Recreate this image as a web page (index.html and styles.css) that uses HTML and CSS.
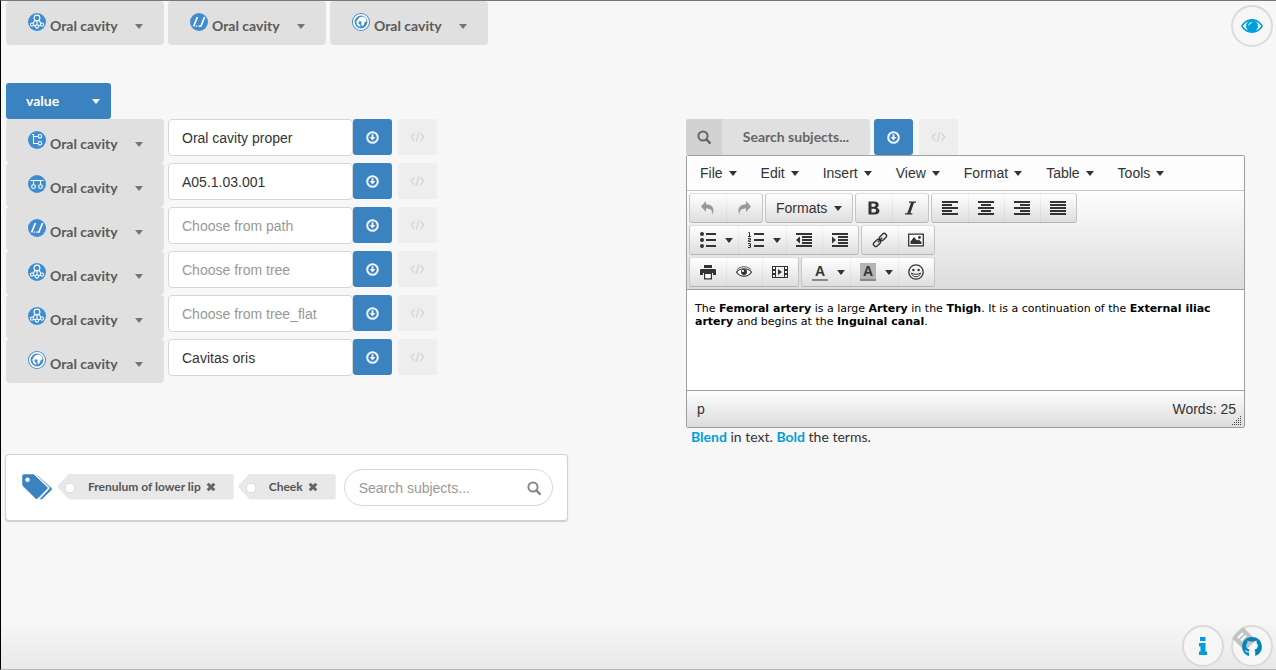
FILE: index.html
```
<!DOCTYPE html>
<html lang="en">
<head>
<meta charset="utf-8">
<title>Subject annotation</title>
<link rel="stylesheet" href="styles.css">
</head>
<body>
<svg class="defs" aria-hidden="true">
  <symbol id="tree" viewBox="0 0 18 18"><circle cx="9" cy="9" r="9" fill="#3f8dd0"/><g fill="none" stroke="#fff" stroke-width="1.1"><circle cx="9" cy="5" r="2.9"/><circle cx="4" cy="11.600" r="1.600"/><circle cx="9" cy="13.500" r="1.600"/><circle cx="14" cy="11.600" r="1.600"/><path d="M9 8v3.800M7.300 7.400l-2.300 2.800M10.700 7.400l2.300 2.800M5.600 12.200l1.900.8M12.400 12.200l-1.900.8"/></g></symbol>
  <symbol id="path" viewBox="0 0 18 18"><circle cx="9" cy="9" r="9" fill="#3f8dd0"/><g fill="none" stroke="#fff" stroke-width="1.6"><path d="M7.4 4L3.6 13.4M14.6 4l-3.8 9.4"/><path d="M5.800 13.200h1.400M8.300 13.200h3" stroke-width="1.3"/></g></symbol>
  <symbol id="globe" viewBox="0 0 18 18"><circle cx="9" cy="9" r="9" fill="#3f8dd0"/><circle cx="9" cy="9" r="7.200" fill="none" stroke="#fff" stroke-width="1.6"/><path d="M7 4.500l4-1 2.600 1.800 1.200 2.700-2 1-.8 2.600-1.800 2-1-3 .6-1.800-2-.6-1.500.8.5 2 1.800 1-.5 2-3-2-.8-3.500z" fill="#fff"/></symbol>
  <symbol id="side" viewBox="0 0 18 18"><circle cx="9" cy="9" r="9" fill="#3f8dd0"/><g fill="none" stroke="#fff" stroke-width="1.1"><path d="M4 3.500h1.500M5.500 3v9.500h4.500M5.500 5.500h4.500"/><circle cx="11.900" cy="5.300" r="1.800"/><circle cx="11.900" cy="12.300" r="1.800"/></g></symbol>
  <symbol id="fork" viewBox="0 0 18 18"><circle cx="9" cy="9" r="9" fill="#3f8dd0"/><g fill="none" stroke="#fff" stroke-width="1.1"><path d="M2.500 5.500h13M5.500 5.500v4.200M12.500 5.500v4.200"/><circle cx="5.500" cy="11.600" r="1.900"/><circle cx="12.500" cy="11.600" r="1.900"/></g></symbol>
  <symbol id="down" viewBox="0 0 14 14"><circle cx="7" cy="7" r="5.700" fill="none" stroke="currentColor" stroke-width="2.2"/><path d="M6 3.400h2v3h2.200L7 10.300 3.800 6.400H6z" fill="currentColor"/></symbol>
  <symbol id="code" viewBox="0 0 16 12"><path d="M4.8 2L1.2 6l3.6 4M11.2 2l3.6 4-3.6 4M9.2 1L6.8 11" fill="none" stroke="currentColor" stroke-width="1.3"/></symbol>
  <symbol id="search" viewBox="0 0 14 14"><circle cx="6" cy="6" r="4.6" fill="none" stroke="currentColor" stroke-width="2"/><path d="M9.4 9.4l3.4 3.4" stroke="currentColor" stroke-width="2.4" stroke-linecap="round"/></symbol>
  <symbol id="cross" viewBox="0 0 10 10"><path d="M1.7 1.7l6.6 6.6M8.3 1.7L1.7 8.3" stroke="currentColor" stroke-width="3"/></symbol>
</svg>

<header class="topbar">
  <button class="drop"><svg><use href="#tree"/></svg><span>Oral cavity</span><i class="caret"></i></button>
  <button class="drop"><svg><use href="#path"/></svg><span>Oral cavity</span><i class="caret"></i></button>
  <button class="drop"><svg><use href="#globe"/></svg><span>Oral cavity</span><i class="caret"></i></button>
</header>

<main class="columns">
  <section>
    <button class="value">value<i class="caret"></i></button>
    <div class="row"><button class="drop"><svg><use href="#side"/></svg><span>Oral cavity</span><i class="caret"></i></button><input class="field" aria-label="Name" value="Oral cavity proper"><button class="sq go" aria-label="Load"><svg><use href="#down"/></svg></button><button class="sq code" aria-label="Code" disabled><svg><use href="#code"/></svg></button></div>
    <div class="row"><button class="drop"><svg><use href="#fork"/></svg><span>Oral cavity</span><i class="caret"></i></button><input class="field" aria-label="Identifier" value="A05.1.03.001"><button class="sq go" aria-label="Load"><svg><use href="#down"/></svg></button><button class="sq code" aria-label="Code" disabled><svg><use href="#code"/></svg></button></div>
    <div class="row"><button class="drop"><svg><use href="#path"/></svg><span>Oral cavity</span><i class="caret"></i></button><input class="field" aria-label="Path" placeholder="Choose from path"><button class="sq go" aria-label="Load"><svg><use href="#down"/></svg></button><button class="sq code" aria-label="Code" disabled><svg><use href="#code"/></svg></button></div>
    <div class="row"><button class="drop"><svg><use href="#tree"/></svg><span>Oral cavity</span><i class="caret"></i></button><input class="field" aria-label="Tree" placeholder="Choose from tree"><button class="sq go" aria-label="Load"><svg><use href="#down"/></svg></button><button class="sq code" aria-label="Code" disabled><svg><use href="#code"/></svg></button></div>
    <div class="row"><button class="drop"><svg><use href="#tree"/></svg><span>Oral cavity</span><i class="caret"></i></button><input class="field" aria-label="Flat tree" placeholder="Choose from tree_flat"><button class="sq go" aria-label="Load"><svg><use href="#down"/></svg></button><button class="sq code" aria-label="Code" disabled><svg><use href="#code"/></svg></button></div>
    <div class="row"><button class="drop"><svg><use href="#globe"/></svg><span>Oral cavity</span><i class="caret"></i></button><input class="field" aria-label="Latin name" value="Cavitas oris"><button class="sq go" aria-label="Load"><svg><use href="#down"/></svg></button><button class="sq code" aria-label="Code" disabled><svg><use href="#code"/></svg></button></div>

    <div class="tags">
      <svg class="tagicon" viewBox="0 0 31 26"><path d="M10 1h3.5q1.5 0 2.600 1.100L29.500 14q1 1 0 2L20 25.200h-2.500" fill="#3b83c0"/><path fill-rule="evenodd" d="M0 2Q0 0 2 0h9q1.500 0 2.500 1L25.500 13q1 1 0 2L15.500 24.800q-1 1-2 0L1 12.500Q0 11.500 0 10zM5.500 3.800a2 2 0 1 0 0 4 2 2 0 0 0 0-4z" fill="#3b83c0" stroke="#fff" stroke-width=".5"/><path d="M12.500 0L26.500 13.300q.8.700 0 1.500L17 25" fill="none" stroke="#fff" stroke-width="1.300"/></svg>
      <span class="tag">Frenulum of lower lip<button class="x" aria-label="Remove Frenulum of lower lip"><svg><use href="#cross"/></svg></button></span>
      <span class="tag">Cheek<button class="x" aria-label="Remove Cheek"><svg><use href="#cross"/></svg></button></span>
      <label class="find"><input aria-label="Search subjects" placeholder="Search subjects..."><svg><use href="#search"/></svg></label>
    </div>
  </section>

  <section>
    <div class="subject">
      <button class="searchbtn"><span class="mag"><svg><use href="#search"/></svg></span><span class="searchtext">Search subjects...</span></button>
      <button class="sq go" aria-label="Load"><svg><use href="#down"/></svg></button>
      <button class="sq code" aria-label="Code" disabled><svg><use href="#code"/></svg></button>
    </div>
    <div class="editor">
      <nav class="menubar">
        <button>File<i class="caret"></i></button><button>Edit<i class="caret"></i></button><button>Insert<i class="caret"></i></button><button>View<i class="caret"></i></button><button>Format<i class="caret"></i></button><button>Table<i class="caret"></i></button><button>Tools<i class="caret"></i></button>
      </nav>
      <div class="tools">
        <div class="toolrow">
          <div class="group dim">
            <button aria-label="Undo"><svg viewBox="0 0 16 16"><path d="M6 1v3.300c5.500 0 9.500 4 6.500 10.700.3-4.500-2-6.500-6.500-6.500V12L1 6.500z"/></svg></button>
            <button aria-label="Redo"><svg viewBox="0 0 16 16"><path d="M10 1v3.300c-5.500 0-9.500 4-6.500 10.700-.3-4.500 2-6.500 6.500-6.500V12l5-5.500z"/></svg></button>
          </div>
          <div class="group"><button class="formats">Formats<i class="caret"></i></button></div>
          <div class="group">
            <button aria-label="Bold"><svg viewBox="0 0 16 16"><path fill-rule="evenodd" d="M2.500 1.500h6c5 0 5.200 5 2.400 6.200 4 1.300 3.300 6.800-2 6.800H2.500zM5.500 3.600v3.100h2.400c2.300 0 2.300-3.100 0-3.100zM5.500 8.800v3.600h2.700c2.600 0 2.600-3.600 0-3.600z"/></svg></button>
            <button aria-label="Italic"><svg viewBox="0 0 16 16"><path d="M7 1.500h7v1.300h-2L8.300 13.200h2v1.300H3v-1.300h2.300L9 2.800H7z"/></svg></button>
          </div>
          <div class="group">
            <button aria-label="Align left"><svg viewBox="0 0 16 16"><path d="M0 1h16v2H0zM0 4h10v2H0zM0 7h16v2H0zM0 10h10v2H0zM0 13h16v2H0z"/></svg></button>
            <button aria-label="Align center"><svg viewBox="0 0 16 16"><path d="M0 1h16v2H0zM3 4h10v2H3zM0 7h16v2H0zM3 10h10v2H3zM0 13h16v2H0z"/></svg></button>
            <button aria-label="Align right"><svg viewBox="0 0 16 16"><path d="M0 1h16v2H0zM6 4h10v2H6zM0 7h16v2H0zM6 10h10v2H6zM0 13h16v2H0z"/></svg></button>
            <button aria-label="Justify"><svg viewBox="0 0 16 16"><path d="M0 1h16v2H0zM0 4h16v2H0zM0 7h16v2H0zM0 10h16v2H0zM0 13h16v2H0z"/></svg></button>
          </div>
        </div>
        <div class="toolrow">
          <div class="group">
            <button class="split" aria-label="Bullet list"><svg viewBox="0 0 16 16"><circle cx="2" cy="2" r="2"/><circle cx="2" cy="8" r="2"/><circle cx="2" cy="14" r="2"/><path d="M6 1h10v2H6zM6 7h10v2H6zM6 13h10v2H6z"/></svg><i class="caret"></i></button>
            <button class="split" aria-label="Numbered list"><svg viewBox="0 0 16 16"><path d="M6 1h10v2H6zM6 7h10v2H6zM6 13h10v2H6z"/><path d="M.5.500h1V4M0 4.500h3M0 6.500h2.500v1.500H.5v1.500h2.500M0 11.500h2.500v4H0M.5 13.500h2" fill="none" stroke="#333"/></svg><i class="caret"></i></button>
            <button aria-label="Outdent"><svg viewBox="0 0 16 16"><path d="M0 1h16v2H0zM6 4h10v2H6zM6 7h10v2H6zM6 10h10v2H6zM0 13h16v2H0zM4 4.500v7L0 8z"/></svg></button>
            <button aria-label="Indent"><svg viewBox="0 0 16 16"><path d="M0 1h16v2H0zM6 4h10v2H6zM6 7h10v2H6zM6 10h10v2H6zM0 13h16v2H0zM0 4.500v7L4 8z"/></svg></button>
          </div>
          <div class="group">
            <button aria-label="Link"><svg viewBox="0 0 16 16"><g fill="none" stroke="#333" stroke-width="1.400"><rect x="-4" y="-2.300" width="8" height="4.600" rx="2.300" transform="translate(11 5) rotate(-45)"/><rect x="-4" y="-2.300" width="8" height="4.600" rx="2.300" transform="translate(5 11) rotate(-45)"/><path d="M5.800 10.200l4.400-4.400"/></g></svg></button>
            <button aria-label="Image"><svg viewBox="0 0 16 16"><path d="M.7 2.200h14.600v11.600H.7z" fill="#fff" stroke="#333" stroke-width="1.300"/><circle cx="11.500" cy="5.500" r="1.400"/><path d="M2.500 12V9.500L6 5l3 3.500 1.500-1L13.500 10v2z"/></svg></button>
          </div>
        </div>
        <div class="toolrow">
          <div class="group">
            <button aria-label="Print"><svg viewBox="0 0 16 16"><path d="M4 1h8v3H4z"/><path d="M1 5h14q1 0 1 1v5h-3V9H3v2H0V6q0-1 1-1z"/><path d="M4.600 9.500h6.800v5.300H4.600z" fill="#fff" stroke="#333" stroke-width="1.200"/></svg></button>
            <button aria-label="Preview"><svg viewBox="0 0 16 16"><path d="M.5 8.200C4 3.500 12 3.500 15.500 8.200 12 13.400 4 13.400.5 8.200z" fill="#fff" stroke="#333" stroke-width="1.100"/><circle cx="8" cy="8" r="3"/><circle cx="7" cy="7" r="1.100" fill="#fff"/><path d="M1 5.500C5 1.800 11 1.800 15 5.500" fill="none" stroke="#333" stroke-width=".8"/></svg></button>
            <button aria-label="Media"><svg viewBox="0 0 16 16"><path fill-rule="evenodd" d="M0 2h16v12H0zM1 3v2h2V3zM1 7v2h2V7zM1 11v2h2v-2zM13 3v2h2V3zM13 7v2h2V7zM13 11v2h2v-2zM4 3v10h8V3z"/><path d="M6 5v6l4-3z"/></svg></button>
          </div>
          <div class="group">
            <button class="split" aria-label="Text color"><b class="ink">A</b><i class="caret"></i></button>
            <button class="split" aria-label="Background color"><b class="ink shade">A</b><i class="caret"></i></button>
            <button aria-label="Emoticons"><svg viewBox="0 0 16 16"><circle cx="8" cy="8" r="7.200" fill="none" stroke="#333" stroke-width="1.300"/><circle cx="5.400" cy="6" r="1.200"/><circle cx="10.600" cy="6" r="1.200"/><path d="M3.500 9c1 5 8 5 9 0-2 1.800-7 1.800-9 0z" fill="#fff" stroke="#333"/></svg></button>
          </div>
        </div>
      </div>
      <div class="doc" contenteditable="true" role="textbox" aria-label="Description">The <b>Femoral artery</b> is a large <b>Artery</b> in the <b>Thigh</b>. It is a continuation of the <b>External iliac artery</b> and begins at the <b>Inguinal canal</b>.</div>
      <div class="status"><span>p</span><span>Words: 25</span><svg class="grip" viewBox="0 0 10 10"><path d="M8 0h1v1H8zM6 2h1v1H6zM8 2h1v1H8zM4 4h1v1H4zM6 4h1v1H6zM8 4h1v1H8zM2 6h1v1H2zM4 6h1v1H4zM6 6h1v1H6zM8 6h1v1H8zM0 8h1v1H0zM2 8h1v1H2zM4 8h1v1H4zM6 8h1v1H6zM8 8h1v1H8z"/></svg></div>
    </div>
    <p class="hint"><a href="#blend">Blend</a> in text. <a href="#bold">Bold</a> the terms.</p>
  </section>
</main>

<button class="round view" aria-label="Toggle view"><svg viewBox="0 0 22 16"><path fill-rule="evenodd" d="M0 8C5-1.300 17-1.300 22 8 17 17.300 5 17.300 0 8zm1.800 0C6 15 16 15 20.200 8 16 1 6 1 1.800 8z"/><circle cx="11" cy="8" r="6"/><path d="M7.800 7.500Q8 4.600 11 4.500" fill="none" stroke="#fff"/></svg></button>
<div class="corner">
  <a class="round" href="#info" aria-label="Information"><svg viewBox="0 0 22 18"><path d="M8 0h5.500v4H8zM7 6h6.500v8.500H15V18H7v-3.500h1.500v-5H7z"/></svg></a>
  <a class="round" href="#github" aria-label="GitHub"><svg class="badge" viewBox="0 0 24 24"><path d="M11 2L22 13 13 22 2 11z" fill="#c2c2c2" stroke="#c2c2c2" stroke-width="3" stroke-linejoin="round"/><path d="M6 11l5-5M9 13.500l5-5" stroke="#fff" stroke-width="2"/></svg><svg class="hub" viewBox="0 0 20 19"><path d="M7 19v-3.500c-3 .5-3.500-1.500-4.500-2.500 2-.3 2.300 2.200 4.500 1.200l.6-1.500C3.500 12 3.500 7.500 5.300 6.200L5.500 3.500 8 4.500h4l2.500-1 .2 2.700c1.800 1.300 1.800 5.800-2.300 6.500.5.600.8 1.300.8 2.300V19C23.500 15.500 21.500 0 10 0S-3.500 15.500 7 19z"/></svg></a>
</div>
</body>
</html>
```
FILE: styles.css
```
* { box-sizing: border-box; }
body {
  margin: 0;
  min-height: 100vh;
  border-left: 1px solid #000;
  border-top: 1px solid #777;
  border-bottom: 1px solid #b5b5b5;
  background: linear-gradient(to top, #e8e8e8, #f7f7f7 50px);
  font: 14px/20px "Liberation Sans", Arial, sans-serif;
  color: #333;
}
button { font: inherit; color: inherit; border: 0; padding: 0; margin: 0; background: none; cursor: pointer; }
svg { display: block; flex: none; }
a { color: #009fda; text-decoration: none; }
.defs { position: absolute; width: 0; height: 0; }
.caret { flex: none; width: 0; height: 0; border: 4px solid transparent; border-top: 5px solid currentColor; border-bottom: 0; }

.topbar { display: flex; gap: 4px; padding-left: 5px; }
.drop {
  display: flex; align-items: center; flex: none;
  width: 158px; height: 44px; padding: 0 21px 0 22px;
  border-radius: 4px; background: #e0e0e0; color: #5a5a5a;
  font: 700 14px/20px Lato, sans-serif;
}
.drop svg { width: 18px; height: 18px; margin: 0 4px 2px 0; }
.drop span { padding-top: 6px; }
.drop .caret { margin: 6px 0 0 auto; opacity: .8; }

.columns {
  display: grid;
  grid-template-columns: minmax(0, 680fr) minmax(0, 559fr);
  align-items: start;
  padding: 38px 31px 0 5px;
}
.columns > section:last-child { padding-top: 36px; }
.value {
  display: flex; align-items: center; justify-content: space-between;
  width: 105px; height: 36px; padding: 0 11px 0 20px;
  border-radius: 3px; background: #3b83c0; color: #fff;
  font: 700 14px/20px Lato, sans-serif;
}
.row { display: flex; align-items: flex-start; height: 44px; }
.field {
  width: 185px; height: 37px; margin-left: 4px; padding: 0 13px;
  border: 1px solid #d6d6d6; border-radius: 4px; background: #fff;
  font: inherit; color: #333;
}
input::placeholder { color: #999; opacity: 1; }
.sq { display: grid; place-items: center; flex: none; width: 39px; height: 36px; border-radius: 3px; }
.go { background: #3b83c0; color: #eef4fa; }
.go svg { width: 13px; height: 13px; }
.code { margin-left: 6px; background: #eee; color: #d3d3d3; }
.code svg { width: 15px; height: 12px; }

.tags {
  display: flex; align-items: center; width: 563px; max-width: 100%; height: 67px;
  margin: 71px 0 0 -1px; padding: 0 14px 0 16px;
  border: 1px solid #d0d0d0; border-radius: 4px; background: #fff;
  box-shadow: 0 1px 1px #ccc;
}
.tagicon { width: 31px; height: 26px; margin: 0 4px 2px 0; }
.tag {
  position: relative; display: flex; align-items: center; flex: none; height: 26px;
  margin: 0 4px 2px 0; padding: 0 18px 0 31px;
  background: #e8e8e8; color: #555;
  font: 700 12px/16px Lato, sans-serif;
  border-radius: 0 3px 3px 0;
  clip-path: polygon(0 50%, 12px 0, 100% 0, 100% 100%, 12px 100%);
}
.tag::before { content: ""; position: absolute; left: 8px; top: 9px; width: 8px; height: 8px; border-radius: 4px; background: #fff; border: 1px solid #ddd; }
.x { margin-left: 5px; color: #666; }
.x svg { width: 10px; height: 10px; }
.find {
  display: flex; align-items: center; flex: 1; min-width: 0; height: 37px;
  margin-left: 4px; padding: 0 11px 0 14px;
  border: 1px solid #d6d6d6; border-radius: 19px; color: #888;
}
.find input { flex: 1; min-width: 0; border: 0; padding: 0; background: none; font: inherit; outline: 0; }
.find svg { width: 14px; height: 14px; }

.subject { display: flex; }
.searchbtn { display: flex; width: 184px; height: 36px; margin-right: 4px; border-radius: 3px; overflow: hidden; background: #e0e0e0; color: #666; font: 700 14px/36px Lato, sans-serif; }
.mag { display: grid; place-items: center; width: 36px; height: 36px; background: #d2d2d2; }
.mag svg { width: 14px; height: 14px; }
.searchtext { flex: 1; }

.editor { border: 1px solid #9e9e9e; border-radius: 2px; background: #fff; }
.menubar { display: flex; flex-wrap: wrap; gap: 8px; padding: 2px 5px; border-bottom: 1px solid #c4c4c4; background: #fdfdfd; }
.menubar button { display: flex; align-items: center; gap: 6px; height: 30px; padding: 0 8px; }
.tools { display: flex; flex-direction: column; gap: 2px; padding: 2px; border-bottom: 1px solid #9e9e9e; background: linear-gradient(#fdfdfd, #dcdcdc); }
.toolrow { display: flex; flex-wrap: wrap; gap: 2px; }
.group { display: flex; height: 30px; border: 1px solid #c6c6c6; border-color: #ddd #c4c4c4 #b5b5b5 #c6c6c6; border-radius: 3px; background: linear-gradient(#fff, #dedede); }
.group button { display: grid; place-items: center; width: 36px; }
.group button + button { box-shadow: inset 1px 0 rgba(0, 0, 0, .04); }
.group svg { width: 16px; height: 16px; fill: #333; }
.group.dim svg { fill: #999; }
.group .split { display: flex; align-items: center; justify-content: space-between; width: 48px; padding: 0 5px 0 10px; }
.group .formats { display: flex; align-items: center; justify-content: space-between; width: 86px; padding: 0 10px; }
.ink { width: 16px; border-bottom: 2px solid #888; font: 700 14px/16px "Liberation Sans", Arial, sans-serif; text-align: center; }
.shade { background: #b5b5b5; }
.doc { min-height: 100px; padding: 12px 8px; color: #000; font: 11px/13px "DejaVu Sans", Verdana, sans-serif; outline: 0; }
.status { position: relative; display: flex; align-items: center; justify-content: space-between; height: 37px; padding: 0 8px 0 10px; border-top: 1px solid #9e9e9e; background: linear-gradient(#fdfdfd, #dcdcdc); }
.grip { position: absolute; right: 2px; bottom: 1px; width: 10px; height: 10px; fill: #444; }
.hint { margin: 0; padding-left: 5px; font: 14px/18px Lato, sans-serif; }
.hint a { font-weight: 700; }

.round { position: relative; display: grid; place-items: center; width: 42px; height: 42px; border: 2px solid #dadada; border-radius: 21px; background: #f6f6f6; }
.round svg { fill: #009fda; width: 22px; height: 18px; }
.view { position: fixed; top: 5px; right: 3px; }
.corner { position: fixed; right: 3px; bottom: 3px; display: flex; gap: 7px; }
.round .badge { position: absolute; left: -1px; top: 0; width: 24px; height: 24px; }
.round .hub { position: relative; width: 20px; height: 19px; fill: #0086bd; }
```
